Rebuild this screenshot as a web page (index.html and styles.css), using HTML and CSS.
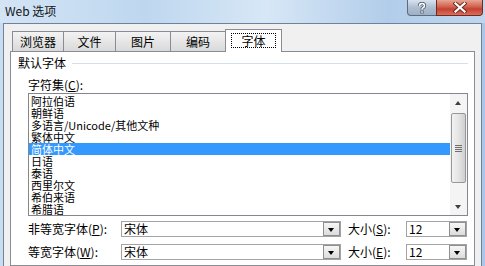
FILE: index.html
```html
<!DOCTYPE html>
<html lang="zh-CN">
<head>
    <meta charset="UTF-8">
    <title>Web 选项</title>
    <link rel="stylesheet" href="styles.css">
</head>
<body>
    <div class="frame">
        <div class="titlebar">
            <span class="title">Web 选项</span>
            <div class="caption-btns">
                <div class="cbtn help">
                    <svg width="12" height="12" viewBox="0 0 12 12">
                        <path d="M3.5 4 Q3.5 1.5 6 1.5 Q8.5 1.5 8.5 3.8 Q8.5 5.2 6.8 5.9 Q6 6.3 6 7.5" fill="none" stroke="#4a5868" stroke-width="3.2"/>
                        <rect x="4.4" y="8.6" width="3.2" height="2.8" fill="#4a5868"/>
                        <path d="M3.5 4 Q3.5 1.5 6 1.5 Q8.5 1.5 8.5 3.8 Q8.5 5.2 6.8 5.9 Q6 6.3 6 7.5" fill="none" stroke="#fff" stroke-width="1.6"/>
                        <rect x="5.2" y="9.3" width="1.6" height="1.5" fill="#fff"/>
                    </svg>
                </div>
                <div class="cbtn close">
                    <svg width="14" height="11" viewBox="0 0 14 11">
                        <path d="M2.5 1.5 L11.5 9.5 M11.5 1.5 L2.5 9.5" stroke="#6b2a24" stroke-width="4" stroke-linecap="square"/>
                        <path d="M2.5 1.5 L11.5 9.5 M11.5 1.5 L2.5 9.5" stroke="#fff" stroke-width="2.2" stroke-linecap="square"/>
                    </svg>
                </div>
            </div>
        </div>

        <div class="window">
            <div class="tabs">
                <div class="tab t1">浏览器</div>
                <div class="tab t2">文件</div>
                <div class="tab t3">图片</div>
                <div class="tab t4">编码</div>
                <div class="tab selected"><span class="focus">字体</span></div>
            </div>

            <div class="pane">
                <div class="group-head">
                    <span>默认字体</span>
                    <span class="rule"></span>
                </div>

                <div class="indent">
                    <div class="field-label">字符集(<u>C</u>):</div>

                    <div class="listbox">
                        <ul class="items">
                            <li>阿拉伯语</li>
                            <li>朝鲜语</li>
                            <li>多语言/Unicode/其他文种</li>
                            <li>繁体中文</li>
                            <li class="active">简体中文</li>
                            <li>日语</li>
                            <li>泰语</li>
                            <li>西里尔文</li>
                            <li>希伯来语</li>
                            <li>希腊语</li>
                        </ul>
                        <div class="vscroll">
                            <div class="arrow up"></div>
                            <div class="thumb"><span class="grip"></span></div>
                            <div class="track"></div>
                            <div class="arrow down"></div>
                        </div>
                    </div>

                    <div class="row">
                        <span class="row-label">非等宽字体(<u>P</u>):</span>
                        <div class="combo wide"><span>宋体</span><span class="dd"></span></div>
                        <span class="row-label size">大小(<u>S</u>):</span>
                        <div class="combo small"><span>12</span><span class="dd"></span></div>
                    </div>
                    <div class="row">
                        <span class="row-label">等宽字体(<u>W</u>):</span>
                        <div class="combo wide"><span>宋体</span><span class="dd"></span></div>
                        <span class="row-label size">大小(<u>E</u>):</span>
                        <div class="combo small"><span>12</span><span class="dd"></span></div>
                    </div>
                </div>
            </div>
        </div>
    </div>
</body>
</html>
```

FILE: styles.css
```css
* {
    box-sizing: border-box;
}
body {
    margin: 0;
    padding: 0;
    font-family: "Noto Sans CJK SC", "Liberation Sans", sans-serif;
    font-size: 12px;
    color: #000;
    background: #b9d2ec;
}
.frame {
    width: 485px;
    height: 266px;
    overflow: hidden;
    padding: 0 3px;
    background: linear-gradient(90deg, #c9ddf1 0%, #b3cfec 40%, #c6dcf2 60%, #a9c8e9 100%);
}
.titlebar {
    height: 23px;
    margin: 0 -3px;
    display: flex;
    justify-content: space-between;
    align-items: flex-start;
    background: linear-gradient(90deg, #d3e4f5 0%, #bed7ef 30%, #d7e7f6 55%, #b2cdea 80%, #bfd6ee 100%);
}
.title {
    padding-left: 5px;
    line-height: 22px;
    font-size: 12px;
    color: #101418;
}
.caption-btns {
    display: flex;
    margin-right: 2px;
}
.cbtn {
    height: 16px;
    display: flex;
    align-items: center;
    justify-content: center;
    border: 1px solid #5c6b7e;
    border-top: none;
}
.help {
    width: 29px;
    border-radius: 0 0 0 4px;
    border-right: none;
    background: linear-gradient(#d7e3ef, #aebdd0 50%, #9fb0c6);
}
.close {
    width: 47px;
    border-radius: 0 0 4px 0;
    border-color: #6e2a23;
    background: linear-gradient(#e8a593, #d0624e 45%, #c4412e 60%, #d9705c);
}

.window {
    height: 243px;
    border: 1px solid #6f8299;
    border-bottom: none;
    background: #f0f0f0;
    padding: 5px 6px 0 6px;
}
.tabs {
    display: flex;
    align-items: flex-end;
    height: 22px;
    padding-left: 2px;
}
.tab {
    height: 20px;
    border: 1px solid #898c95;
    border-bottom: none;
    margin-right: -1px;
    display: flex;
    align-items: center;
    justify-content: center;
    background: linear-gradient(#f3f3f3, #e6e6e6 50%, #d9d9d9);
    line-height: 12px;
}
.t1 { width: 52px; }
.t2 { width: 53px; }
.t3 { width: 56px; }
.t4 { width: 56px; }
.tab.selected {
    width: 57px;
    height: 23px;
    margin-bottom: -1px;
    position: relative;
    z-index: 1;
    background: #fff;
    padding-bottom: 2px;
}
.focus {
    display: block;
    width: 45px;
    height: 15px;
    line-height: 13px;
    text-align: center;
    border: 1px dotted #000;
}

.pane {
    height: 215px;
    background: #fff;
    border: 1px solid #898c95;
    padding: 3px 6px 0 7px;
}
.group-head {
    display: flex;
    align-items: center;
    height: 16px;
    line-height: 16px;
}
.rule {
    flex: 1;
    height: 1px;
    margin-left: 6px;
    background: #d5dfe5;
}
.indent {
    padding-left: 10px;
}
.field-label {
    margin-top: 6px;
    line-height: 16px;
    height: 16px;
}
.listbox {
    width: 440px;
    height: 123px;
    border: 1px solid #828790;
    display: flex;
}
.items {
    flex: 1;
    list-style: none;
    margin: 0;
    padding: 1px 0 0 0;
    overflow: hidden;
}
.items li {
    height: 12px;
    line-height: 12px;
    font-size: 11px;
    padding-left: 2px;
    white-space: nowrap;
}
.items li.active {
    background: #3399ff;
    color: #fff;
}
.vscroll {
    width: 17px;
    display: flex;
    flex-direction: column;
    background: #f4f4f4;
}
.arrow {
    height: 18px;
    position: relative;
}
.arrow::after {
    content: "";
    position: absolute;
    left: 5px;
    top: 7px;
    border-left: 3.5px solid transparent;
    border-right: 3.5px solid transparent;
}
.arrow.up::after {
    border-bottom: 4px solid #3f3f3f;
}
.arrow.down::after {
    top: 8px;
    border-top: 4px solid #3f3f3f;
}
.thumb {
    height: 70px;
    margin: 1px 1px 0 1px;
    border: 1px solid #979797;
    border-radius: 2px;
    background: linear-gradient(90deg, #f2f2f2, #e4e4e4 50%, #cfcfcf);
    display: flex;
    align-items: center;
    justify-content: center;
}
.grip {
    width: 7px;
    height: 7px;
    background: repeating-linear-gradient(#6f6f6f 0 1px, transparent 1px 2px);
}
.track {
    flex: 1;
}

.row {
    display: flex;
    align-items: center;
    height: 16px;
    margin-top: 5px;
}
.row + .row {
    margin-top: 7px;
}
.row-label {
    width: 93px;
    line-height: 16px;
    white-space: nowrap;
}
.row-label.size {
    width: 58px;
    margin-left: 7px;
}
.combo {
    height: 16px;
    border: 1px solid #a3a3a3;
    display: flex;
    align-items: center;
    justify-content: space-between;
    padding-left: 2px;
    line-height: 14px;
    background: #fff;
}
.combo.wide { width: 220px; }
.combo.small { width: 61px; }
.dd {
    width: 17px;
    height: 14px;
    border: 1px solid #8e8f8f;
    background: linear-gradient(#f6f6f6, #dcdcdc);
    position: relative;
}
.dd::after {
    content: "";
    position: absolute;
    left: 4px;
    top: 5px;
    border-left: 3.5px solid transparent;
    border-right: 3.5px solid transparent;
    border-top: 4px solid #000;
}
```
